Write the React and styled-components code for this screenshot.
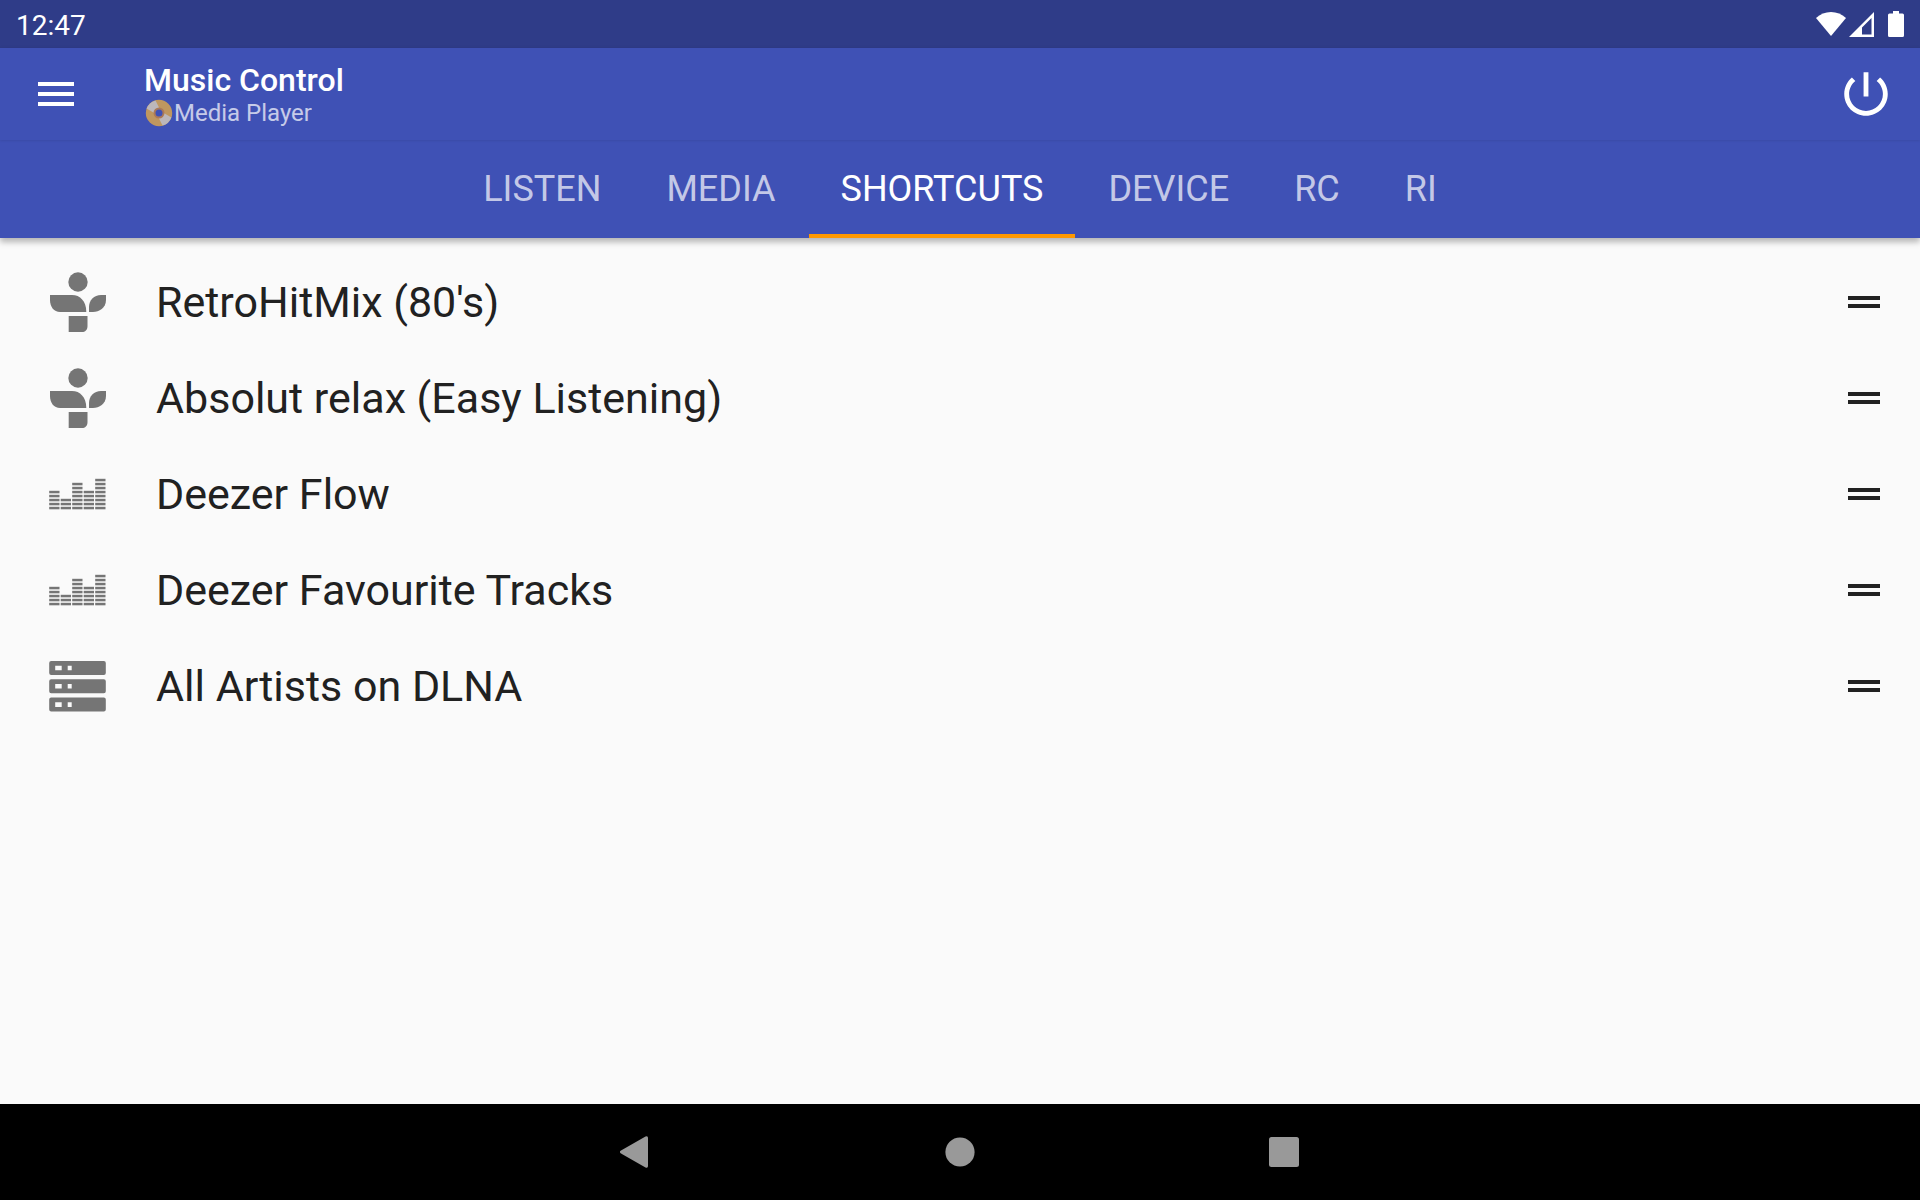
import React, { useState } from "react";
import styled, { createGlobalStyle } from "styled-components";

const GlobalStyle = createGlobalStyle`
  *, *::before, *::after { box-sizing: border-box; }
  body {
    margin: 0;
    font-family: Roboto, "Noto Sans", sans-serif;
    background: #fafafa;
    color: #212121;
  }
`;

const Screen = styled.div`
  display: flex;
  flex-direction: column;
  min-height: 100vh;
`;

const StatusBar = styled.div`
  display: flex;
  align-items: center;
  justify-content: space-between;
  height: 48px;
  padding: 0 16px;
  background: #2f3c88;
  color: #fff;
`;

const Clock = styled.time`
  font-size: 28px;
  line-height: 32px;
  padding-top: 4px;
`;

const StatusIcons = styled.div`
  display: flex;
  align-items: center;
  fill: #fff;
`;

const StatusGlyph = styled.svg`
  display: block;
  width: ${(p) => p.$width}px;
  height: 28px;
  margin-left: ${(p) => p.$gap || 0}px;
`;

const AppHeader = styled.header`
  background: #3f51b5;
  color: #fff;
  box-shadow: 0 4px 6px rgba(0, 0, 0, 0.28);
`;

const Toolbar = styled.div`
  display: flex;
  align-items: center;
  height: 92px;
  padding: 0 22px 0 24px;
  box-shadow: 0 1px 2px rgba(0, 0, 0, 0.08);
`;

const IconButton = styled.button`
  display: flex;
  align-items: center;
  justify-content: center;
  width: 64px;
  height: 64px;
  padding: 0;
  border: 0;
  background: none;
  color: inherit;
  cursor: pointer;
`;

const Glyph = styled.svg`
  display: block;
  width: ${(p) => p.$size}px;
  height: ${(p) => p.$size}px;
  fill: currentColor;
`;

const Titles = styled.div`
  flex: 1;
  margin-left: 56px;
`;

const Title = styled.h1`
  margin: 0;
  font-size: 32px;
  line-height: 38px;
  font-weight: 500;
`;

const Subtitle = styled.p`
  display: flex;
  align-items: center;
  margin: 0;
  font-size: 24px;
  line-height: 28px;
  opacity: 0.7;
`;

const Disc = styled.svg`
  width: 30px;
  height: 28px;
`;

const Tabs = styled.nav`
  display: flex;
  justify-content: center;
  gap: 1px;
  height: 98px;
`;

const Tab = styled.button`
  padding: 0 32px;
  border: 0;
  border-top: 4px solid transparent;
  border-bottom: 4px solid ${(p) => (p.$active ? "#ff9800" : "transparent")};
  background: none;
  color: ${(p) => (p.$active ? "#fff" : "rgba(255, 255, 255, 0.7)")};
  font-family: inherit;
  font-size: 36px;
  line-height: 40px;
  text-transform: uppercase;
  cursor: pointer;
`;

const Content = styled.main`
  flex: 1;
`;

const ShortcutList = styled.ul`
  margin: 0;
  padding: 16px 24px 16px 48px;
  list-style: none;
`;

const Row = styled.li`
  display: flex;
  align-items: center;
  height: 96px;
`;

const RowIcon = styled.svg`
  width: 60px;
  height: 64px;
  fill: #757575;
`;

const RowLabel = styled.span`
  flex: 1;
  margin-left: 48px;
  font-size: 43px;
  line-height: 50px;
`;

const NavBar = styled.nav`
  display: flex;
  justify-content: center;
  gap: 164px;
  height: 96px;
  background: #000;
`;

const NavButton = styled.button`
  display: flex;
  align-items: center;
  justify-content: center;
  width: 160px;
  padding: 0;
  border: 0;
  background: none;
  color: #999;
  cursor: pointer;
`;

const TuneInIcon = () => (
  <RowIcon viewBox="0 0 60 64" aria-hidden="true">
    <circle cx="30" cy="12" r="9.7" />
    <path d="M2 25H24C32 25 38.300 31 38.300 42H12C6 42 2 37 2 30Z" />
    <path d="M58 25V30C58 38 51 42 45 42H41V37C41 30 46 25 53 25Z" />
    <path d="M20.700 46H39.500V56C39.500 60 37 62 34 62H20.700Z" />
  </RowIcon>
);

const deezerColumns = [5, 3, 7, 5, 8];

const DeezerIcon = () => (
  <RowIcon viewBox="0 0 60 64" aria-hidden="true">
    {deezerColumns.map((count, column) =>
      Array.from({ length: count }, (_, i) => (
        <rect
          key={`${column}-${i}`}
          x={1.2 + column * 11.5}
          y={44.8 - i * 4}
          width="10.3"
          height="2.5"
        />
      ))
    )}
  </RowIcon>
);

const ServerIcon = () => (
  <RowIcon viewBox="0 0 60 64" aria-hidden="true">
    {[7, 25.3, 43.6].map((y) => (
      <path
        key={y}
        fillRule="evenodd"
        d={`M3.200 ${y}h52.600a2 2 0 0 1 2 2v10a2 2 0 0 1 -2 2h-52.600a2 2 0 0 1 -2 -2v-10a2 2 0 0 1 2 -2z
            M7.200 ${y + 4.7}v4.600h6.500v-4.600z M19.700 ${y + 4.7}v4.600h4v-4.600z`}
      />
    ))}
  </RowIcon>
);

const shortcuts = [
  { label: "RetroHitMix (80's)", Icon: TuneInIcon },
  { label: "Absolut relax (Easy Listening)", Icon: TuneInIcon },
  { label: "Deezer Flow", Icon: DeezerIcon },
  { label: "Deezer Favourite Tracks", Icon: DeezerIcon },
  { label: "All Artists on DLNA", Icon: ServerIcon },
];

const tabs = ["Listen", "Media", "Shortcuts", "Device", "RC", "RI"];

export default function App() {
  const [activeTab, setActiveTab] = useState("Shortcuts");

  return (
    <Screen>
      <GlobalStyle />
      <StatusBar>
        <Clock>12:47</Clock>
        <StatusIcons>
          <StatusGlyph $width={30} viewBox="0 0 30 28" aria-hidden="true">
            <path d="M15 26L0 8C8 0 22 0 30 8Z" />
          </StatusGlyph>
          <StatusGlyph $width={26} $gap={2} viewBox="0 0 26 28" aria-hidden="true">
            <path
              fillRule="evenodd"
              d="M26 2V27H1ZM23.500 8L14 17.500V24.500H23.500Z"
            />
          </StatusGlyph>
          <StatusGlyph $width={16} $gap={14} viewBox="0 0 16 28" aria-hidden="true">
            <path d="M5 1H11V3.500H14.500Q16 3.500 16 5V25.500Q16 27 14.500 27H1.500Q0 27 0 25.500V5Q0 3.500 1.500 3.500H5Z" />
          </StatusGlyph>
        </StatusIcons>
      </StatusBar>

      <AppHeader>
        <Toolbar>
          <IconButton type="button" aria-label="Menu">
            <Glyph $size={48} viewBox="0 0 24 24">
              <path d="M3 18h18v-2H3v2zm0-5h18v-2H3v2zm0-7v2h18V6H3z" />
            </Glyph>
          </IconButton>
          <Titles>
            <Title>Music Control</Title>
            <Subtitle>
              <Disc viewBox="0 0 30 28" aria-hidden="true">
                <circle cx="15" cy="14" r="13.200" fill="#f6b53c" />
                <path d="M11 14.500L2.600 9.500A13.200 13.200 0 0 1 11.500 1.400L16 10.500Z" fill="#f1e3bd" />
                <path d="M19 13.500L27.400 18.500A13.200 13.200 0 0 1 18.500 26.600L14 17.500Z" fill="#f1e3bd" />
                <circle cx="15" cy="14" r="4.500" fill="#3f51b5" stroke="#d98a32" strokeWidth="2" />
              </Disc>
              Media Player
            </Subtitle>
          </Titles>
          <IconButton type="button" aria-label="Power">
            <Glyph $size={58} viewBox="0 0 24 24">
              <path d="M13 3h-2v10h2V3zm4.830 2.170l-1.420 1.420C17.990 7.860 19 9.810 19 12c0 3.870-3.130 7-7 7s-7-3.130-7-7c0-2.190 1.010-4.140 2.580-5.420L6.170 5.170C4.230 6.820 3 9.260 3 12c0 4.970 4.030 9 9 9s9-4.030 9-9c0-2.740-1.230-5.180-3.170-6.830z" />
            </Glyph>
          </IconButton>
        </Toolbar>
        <Tabs>
          {tabs.map((name) => (
            <Tab
              key={name}
              type="button"
              $active={name === activeTab}
              aria-current={name === activeTab ? "page" : undefined}
              onClick={() => setActiveTab(name)}
            >
              {name}
            </Tab>
          ))}
        </Tabs>
      </AppHeader>

      <Content>
        <ShortcutList>
          {shortcuts.map(({ label, Icon }) => (
            <Row key={label}>
              <Icon />
              <RowLabel>{label}</RowLabel>
              <IconButton type="button" aria-label={`Move ${label}`}>
                <Glyph $size={48} viewBox="0 0 24 24">
                  <path d="M20 9H4v2h16V9zM4 15h16v-2H4v2z" />
                </Glyph>
              </IconButton>
            </Row>
          ))}
        </ShortcutList>
      </Content>

      <NavBar>
        <NavButton type="button" aria-label="Back">
          <Glyph $size={32} viewBox="0 0 32 32">
            <path d="M0.600 14.800L25.500 0.500Q28 -0.500 28 2V30Q28 32.500 25.500 31.500L0.600 17.200Q-0.800 16 0.600 14.800Z" />
          </Glyph>
        </NavButton>
        <NavButton type="button" aria-label="Home">
          <Glyph $size={32} viewBox="0 0 32 32">
            <circle cx="16" cy="16" r="14.600" />
          </Glyph>
        </NavButton>
        <NavButton type="button" aria-label="Recent apps">
          <Glyph $size={32} viewBox="0 0 32 32">
            <rect x="1" y="1" width="30" height="30" rx="2.500" />
          </Glyph>
        </NavButton>
      </NavBar>
    </Screen>
  );
}
